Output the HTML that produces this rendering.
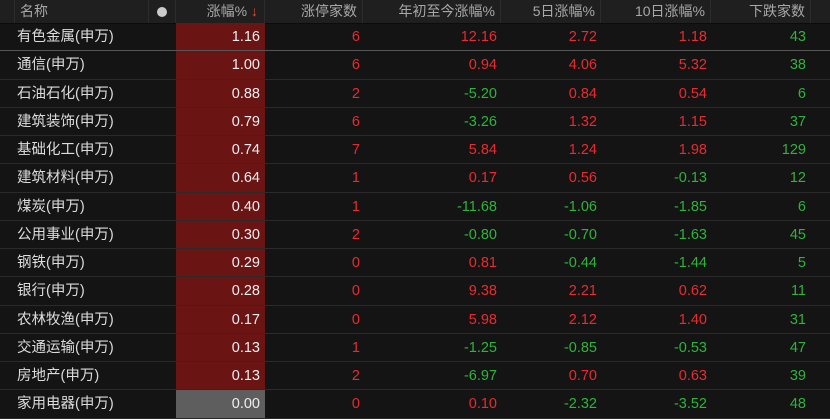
<!DOCTYPE html>
<html><head><meta charset="utf-8"><style>
body{margin:0;background:#141414;width:830px;height:416px;overflow:hidden;font-family:"Liberation Sans","Noto Sans CJK SC",sans-serif;}
.hd{position:absolute;left:0;top:0;width:830px;height:23px;background:#1f1f1f;border-bottom:1px solid #0c0c0c;}
.hd div{position:absolute;top:0;height:23px;line-height:23px;font-size:14px;color:#a8a8a8;text-align:right;border-right:1px solid #2c2c2c;box-sizing:border-box;padding-right:4px}
.row{position:absolute;left:0;width:830px;height:28.25px;border-bottom:1px solid #2a2a2a;box-sizing:border-box;font-size:14.5px;}
.row div{position:absolute;top:0;height:27.25px;line-height:28px;text-align:right}
.n{left:17px;text-align:left!important;color:#dcdcdc}
.p{left:176px;width:89px;background:#6b1414;color:#eee;padding-right:5px;box-sizing:border-box}
.r{color:#ea2a30}.g{color:#2db43c}
</style></head><body>
<div class="hd">
<div style="left:0;width:15px"></div>
<div style="left:15px;width:134px;text-align:left;padding-left:5px">名称</div>
<div style="left:149px;width:27px;text-align:center;padding:0"><span style="display:inline-block;width:10px;height:10px;border-radius:50%;background:#ccc;vertical-align:middle"></span></div>
<div style="left:176px;width:89px;padding-right:6px">涨幅% <span style="color:#e84a2a">↓</span></div>
<div style="left:265px;width:98px;padding-right:5px">涨停家数</div>
<div style="left:363px;width:138px;padding-right:5px">年初至今涨幅%</div>
<div style="left:501px;width:100px;padding-right:5px">5日涨幅%</div>
<div style="left:601px;width:110px;padding-right:5px">10日涨幅%</div>
<div style="left:711px;width:100px;padding-right:5px">下跌家数</div>
</div>
<div id="b"></div>
<script>
var d=[["有色金属(申万)","1.16","6","12.16","2.72","1.18","43"],["通信(申万)","1.00","6","0.94","4.06","5.32","38"],["石油石化(申万)","0.88","2","-5.20","0.84","0.54","6"],["建筑装饰(申万)","0.79","6","-3.26","1.32","1.15","37"],["基础化工(申万)","0.74","7","5.84","1.24","1.98","129"],["建筑材料(申万)","0.64","1","0.17","0.56","-0.13","12"],["煤炭(申万)","0.40","1","-11.68","-1.06","-1.85","6"],["公用事业(申万)","0.30","2","-0.80","-0.70","-1.63","45"],["钢铁(申万)","0.29","0","0.81","-0.44","-1.44","5"],["银行(申万)","0.28","0","9.38","2.21","0.62","11"],["农林牧渔(申万)","0.17","0","5.98","2.12","1.40","31"],["交通运输(申万)","0.13","1","-1.25","-0.85","-0.53","47"],["房地产(申万)","0.13","2","-6.97","0.70","0.63","39"],["家用电器(申万)","0.00","0","0.10","-2.32","-3.52","48"]];
var h="";function c(v){return v[0]=="-"?"g":"r"}
d.forEach(function(r,i){var t=23+i*28.25;
h+='<div class="row" style="top:'+t+'px;'+(i==0?'border-bottom-color:#555':'')+'"><div class="n">'+r[0]+'</div><div class="p" style="'+(i==13?'background:#5e5e5e':'')+'">'+r[1]+'</div><div class="r" style="left:265px;width:95px">'+r[2]+'</div><div class="'+c(r[3])+'" style="left:363px;width:134px">'+r[3]+'</div><div class="'+c(r[4])+'" style="left:501px;width:96px">'+r[4]+'</div><div class="'+c(r[5])+'" style="left:601px;width:106px">'+r[5]+'</div><div class="g" style="left:711px;width:95px">'+r[6]+'</div></div>';});
document.getElementById("b").innerHTML=h;
</script>
</body></html>
